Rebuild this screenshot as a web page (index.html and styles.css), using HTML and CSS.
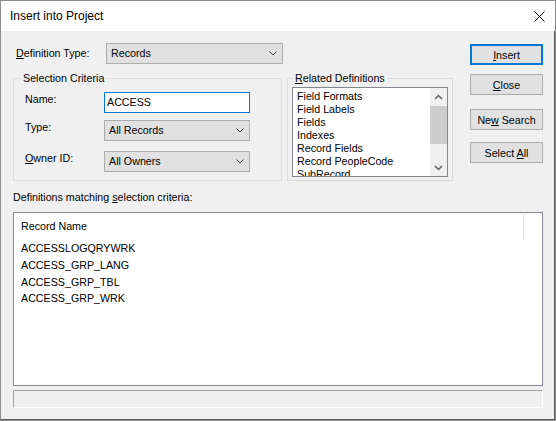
FILE: index.html
```html
<!doctype html>

<html lang="en">
  <head>
    <title>Insert into Project</title>
    <meta charset="utf-8" />
    <link rel="stylesheet" href="styles.css">
  </head>

  <body>
    <div class="dialog">

      <!-- title bar -->
      <div class="titlebar">
        <span class="title">Insert into Project</span>
        <svg class="close-x" width="11" height="11" viewBox="0 0 11 11">
          <path d="M0.5 0.5 L10.5 10.5 M10.5 0.5 L0.5 10.5" stroke="#000" stroke-width="1" fill="none"/>
        </svg>
      </div>

      <div class="dialog-body">
        <div class="top">

          <div class="criteria">
            <div class="deftype-row">
              <label class="deftype-label"><u>D</u>efinition Type:</label>
              <div class="combo combo-wide">
                <span>Records</span>
                <svg class="chevron" width="8" height="5" viewBox="0 0 8 5"><polyline points="0.5,0.5 4,4 7.5,0.5" stroke="#444" fill="none"/></svg>
              </div>
            </div>

            <div class="groups">
              <fieldset class="group group-criteria">
                <legend>Selection Criteria</legend>
                <div class="field-row">
                  <label class="field-label">Name:</label>
                  <div class="textbox">ACCESS</div>
                </div>
                <div class="field-row row-type">
                  <label class="field-label">Type:</label>
                  <div class="combo combo-field">
                    <span>All Records</span>
                    <svg class="chevron" width="8" height="5" viewBox="0 0 8 5"><polyline points="0.5,0.5 4,4 7.5,0.5" stroke="#444" fill="none"/></svg>
                  </div>
                </div>
                <div class="field-row row-owner">
                  <label class="field-label"><u>O</u>wner ID:</label>
                  <div class="combo combo-field">
                    <span>All Owners</span>
                    <svg class="chevron" width="8" height="5" viewBox="0 0 8 5"><polyline points="0.5,0.5 4,4 7.5,0.5" stroke="#444" fill="none"/></svg>
                  </div>
                </div>
              </fieldset>

              <fieldset class="group group-related">
                <legend><u>R</u>elated Definitions</legend>
                <div class="listbox">
                  <ul class="listbox-items">
                    <li>Field Formats</li>
                    <li>Field Labels</li>
                    <li>Fields</li>
                    <li>Indexes</li>
                    <li>Record Fields</li>
                    <li>Record PeopleCode</li>
                    <li>SubRecord</li>
                  </ul>
                  <div class="scrollbar">
                    <div class="scroll-btn">
                      <svg width="9" height="6" viewBox="0 0 9 6"><polyline points="1,5 4.5,1.5 8,5" stroke="#606060" stroke-width="1.5" fill="none"/></svg>
                    </div>
                    <div class="scroll-track">
                      <div class="scroll-thumb"></div>
                    </div>
                    <div class="scroll-btn">
                      <svg width="9" height="6" viewBox="0 0 9 6"><polyline points="1,1 4.5,4.5 8,1" stroke="#606060" stroke-width="1.5" fill="none"/></svg>
                    </div>
                  </div>
                </div>
              </fieldset>
            </div>
          </div>

          <!-- command buttons -->
          <div class="buttons">
            <button class="btn btn-default"><u>I</u>nsert</button>
            <button class="btn btn-close"><u>C</u>lose</button>
            <button class="btn btn-search">Ne<u>w</u> Search</button>
            <button class="btn btn-select">Select <u>A</u>ll</button>
          </div>
        </div>

        <div class="matches-label">Definitions matching <u>s</u>election criteria:</div>

        <div class="results">
          <div class="results-header">
            <span class="col-name">Record Name</span>
          </div>
          <ul class="results-rows">
            <li>ACCESSLOGQRYWRK</li>
            <li>ACCESS_GRP_LANG</li>
            <li>ACCESS_GRP_TBL</li>
            <li>ACCESS_GRP_WRK</li>
          </ul>
        </div>

        <div class="statusbar"></div>
      </div>
    </div>
  </body>
</html>
```

FILE: styles.css
```css
*{
  margin: 0;
  padding: 0;
  box-sizing: border-box;
}

body{
  font-family: "Liberation Sans", Arial, sans-serif;
  font-size: 10.7px;
  line-height: 13px;
  color: black;
  background-color: #f0f0f0;
}

.dialog{
  width: 556px;
  height: 421px;
  border: 1px solid #8c8c8c;
  box-shadow: inset -1px -1px 0 #5a5a5a;
  background-color: #f0f0f0;
  display: flex;
  flex-direction: column;
}

/* title bar */
.titlebar{
  height: 30px;
  background-color: white;
  display: flex;
  align-items: center;
  justify-content: space-between;
  padding: 0 10px 0 9px;
}

.title{
  font-size: 12px;
  line-height: 16px;
}

.close-x{
  display: block;
}

.dialog-body{
  flex: 1;
  padding: 0 12px;
}

.top{
  display: flex;
  justify-content: space-between;
}

.criteria{
  width: 440px;
}

.deftype-row{
  display: flex;
  align-items: center;
  margin-top: 12px;
  height: 21px;
}

.deftype-label{
  width: 93px;
  padding-left: 3px;
}

/* combo boxes */
.combo{
  height: 21px;
  background-color: #e1e1e1;
  border: 1px solid #adadad;
  display: flex;
  align-items: center;
  justify-content: space-between;
  padding: 0 5px 0 4px;
}

.combo-wide{
  width: 177px;
}

.combo-field{
  width: 146px;
}

.chevron{
  display: block;
}

/* group boxes */
.groups{
  display: flex;
  gap: 5px;
  margin-top: 8px;
}

.group{
  border: 1px solid #dcdcdc;
  height: 109px;
  padding: 0;
}

.group legend{
  margin-left: 7px;
  padding: 0 2px;
  line-height: 13px;
}

.group-criteria{
  width: 269px;
  padding: 7px 0 0 11px;
}

.group-criteria legend{
  margin-left: -4px;
}

.field-row{
  display: flex;
  align-items: flex-start;
}

.row-type{
  margin-top: 7px;
}

.row-owner{
  margin-top: 10px;
}

.field-label{
  width: 79px;
  padding-top: 1px;
}

.textbox{
  width: 146px;
  height: 21px;
  background-color: white;
  border: 1px solid #0078d7;
  padding: 3px 0 0 2px;
}

.group-related{
  width: 166px;
  padding: 2px 4px 0 4px;
}

.group-related legend{
  margin-left: 1px;
}

/* related definitions list */
.listbox{
  height: 90px;
  border: 1px solid #828790;
  background-color: white;
  display: flex;
  overflow: hidden;
}

.listbox-items{
  flex: 1;
  list-style: none;
  padding: 2px 0 0 4px;
  overflow: hidden;
}

.scrollbar{
  width: 17px;
  background-color: #f0f0f0;
  display: flex;
  flex-direction: column;
}

.scroll-btn{
  height: 17px;
  display: flex;
  align-items: center;
  justify-content: center;
}

.scroll-track{
  flex: 1;
  padding-top: 1px;
}

.scroll-thumb{
  height: 38px;
  background-color: #cdcdcd;
}

/* buttons */
.buttons{
  width: 73px;
  margin-top: 13px;
  display: flex;
  flex-direction: column;
}

.btn{
  height: 21px;
  font-family: "Liberation Sans", Arial, sans-serif;
  font-size: 10.7px;
  color: black;
  background-color: #e1e1e1;
  border: 1px solid #adadad;
}

.btn-default{
  border: 2px solid #0078d7;
}

.btn-close{
  margin-top: 9px;
}

.btn-search{
  margin-top: 14px;
}

.btn-select{
  margin-top: 12px;
}

/* results list */
.matches-label{
  margin-top: 10px;
}

.results{
  margin-top: 8px;
  height: 174px;
  border: 1px solid #828790;
  background-color: white;
}

.results-header{
  height: 25px;
  padding: 7px 0 0 7px;
}

.col-name{
  display: block;
  width: 503px;
  border-right: 1px solid #e5e5e5;
  margin-top: -6px;
  padding-top: 6px;
  height: 25px;
}

.results-rows{
  list-style: none;
  padding: 2px 0 0 7px;
}

.results-rows li{
  line-height: 16.8px;
}

.statusbar{
  margin-top: 4px;
  height: 18px;
  border: 1px solid #a0a0a0;
  border-right-color: white;
  border-bottom-color: white;
}
```
